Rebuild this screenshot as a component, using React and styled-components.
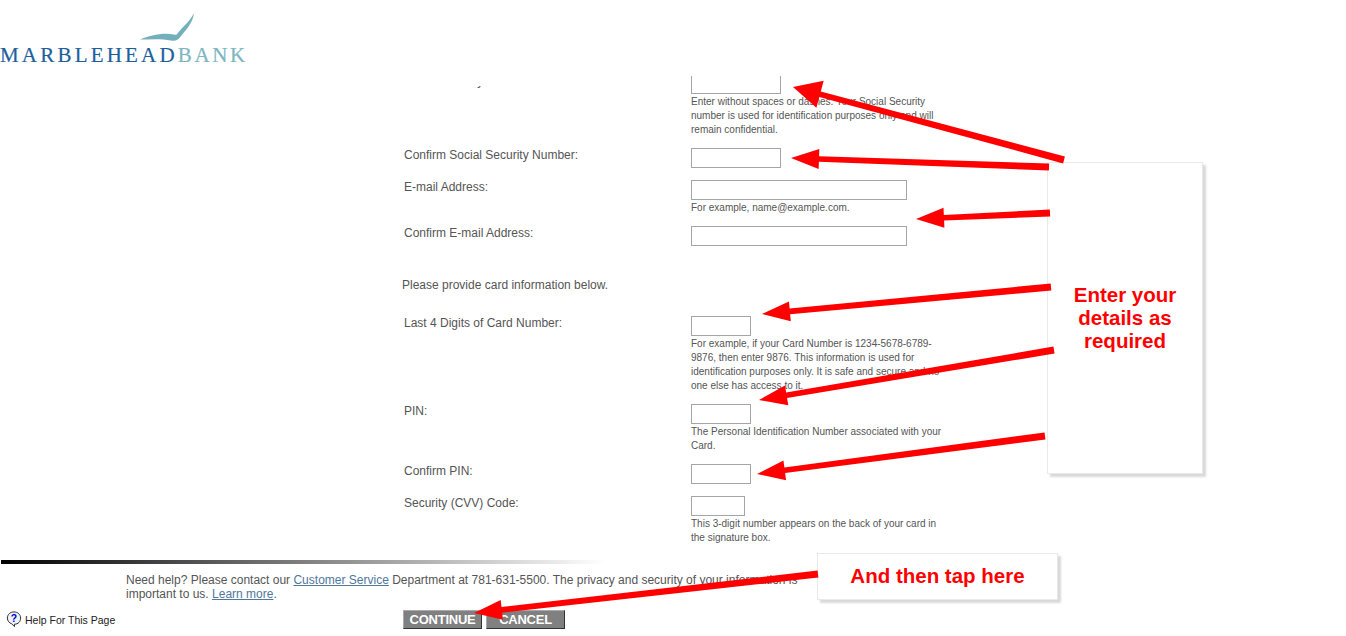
import styled, { createGlobalStyle } from 'styled-components';

const GlobalStyle = createGlobalStyle`
    html, body {
        margin: 0;
        padding: 0;
        background: #fff;
    }
    body {
        font-family: "Liberation Sans", Arial, sans-serif;
    }
`;

const Page = styled.div`
    position: relative;
    width: 1346px;
    height: 636px;
    display: flex;
    flex-direction: column;
    overflow: hidden;
    background: #fff;
`;

const Header = styled.header`
    position: relative;
    height: 76px;
    flex: none;
`;
const Bird = styled.svg`
    position: absolute;
    left: 0;
    top: 0;
`;
const Wordmark = styled.div`
    padding-top: 43px;
    font-family: "Liberation Serif", "Times New Roman", serif;
    font-size: 21px;
    line-height: 24px;
    letter-spacing: 3.2px;
    white-space: nowrap;
    color: #1c5f9c;
    -webkit-text-stroke: 0.2px currentColor;
`;
const WordmarkLight = styled.span`
    color: #7db6c2;
    letter-spacing: 2.6px;
`;

const FormArea = styled.main`
    height: 484px;
    flex: none;
    overflow: hidden;
    padding-left: 404px;
`;
const FormGroup = styled.div`
    display: flex;
    flex-direction: column;
    gap: 12px;
    margin-top: ${(p) => p.$offset || 0}px;
`;
const Row = styled.div`
    display: grid;
    grid-template-columns: 287px 255px;
`;
const Label = styled.label`
    font-size: 12px;
    line-height: 14px;
    color: #555;
`;
// the page is scrolled: only the tail under the baseline still shows
const ScrolledLabel = styled(Label)`
    clip-path: inset(12px 0 0 0);
`;
const Field = styled.div`
    display: flex;
    flex-direction: column;
    align-items: flex-start;
`;
const TextBox = styled.input`
    box-sizing: border-box;
    width: ${(p) => p.$width}px;
    height: 20px;
    margin: 0;
    padding: 0;
    border: 1px solid #a5a5a5;
    background: #fff;
`;
const Hint = styled.p`
    margin: 1px 0 -1px;
    font-size: 10px;
    line-height: 14px;
    color: #555;
`;
const SectionNote = styled.p`
    margin: 31px 0 23px -2px;
    font-size: 12px;
    line-height: 16px;
    color: #555;
`;

const Footer = styled.footer`
    flex: 1;
`;
const Rule = styled.div`
    width: 604px;
    height: 4px;
    margin-left: 1px;
    background: linear-gradient(to right, #000, #fff);
`;
const HelpText = styled.p`
    width: 680px;
    margin: 9px 0 0 126px;
    font-size: 12px;
    line-height: 14px;
    color: #555;
`;
const TextLink = styled.a`
    color: #50779c;
    text-decoration: underline;
`;
const BottomRow = styled.div`
    display: grid;
    grid-template-columns: 403px auto;
    align-items: start;
    margin-top: 9px;
`;
const PageHelp = styled.div`
    display: flex;
    align-items: center;
    gap: 3px;
    padding: 1px 0 0 6px;
    font-size: 10.5px;
    line-height: 16px;
    color: #222;
`;
const Buttons = styled.div`
    display: flex;
    gap: 4px;
`;
const ActionButton = styled.button`
    box-sizing: border-box;
    width: 79px;
    height: 19px;
    padding: 0;
    border: 1px solid;
    border-color: #aaa #333 #333 #aaa;
    background: #808080;
    color: #fff;
    font-family: "Liberation Sans", Arial, sans-serif;
    font-size: 13px;
    font-weight: bold;
    letter-spacing: -0.25px;
    line-height: 16px;
`;

const Callout = styled.aside`
    position: absolute;
    left: ${(p) => p.$left}px;
    top: ${(p) => p.$top}px;
    width: ${(p) => p.$width}px;
    height: ${(p) => p.$height}px;
    box-sizing: border-box;
    display: flex;
    align-items: center;
    justify-content: center;
    padding: 0 10px 2px;
    border: 1px solid #e9e9e9;
    box-shadow: 3px 3px 2px #d9d9d9;
    background: #fff;
    text-align: center;
    color: #f00;
    font-size: 20.5px;
    font-weight: bold;
    line-height: 23px;
`;
const ArrowLayer = styled.svg`
    position: absolute;
    left: 0;
    top: 0;
    pointer-events: none;
`;

// tail x/y, tip x/y, half width of the head
const arrows = [
    [1064, 160, 793, 87, 14],
    [1049, 167, 791, 158, 10],
    [1050, 213, 916, 219, 10],
    [1051, 287, 762, 314, 10],
    [1054, 350, 759, 400, 10],
    [1045, 436, 757, 474, 10],
    [818, 574, 474, 613, 10],
];

// shaft + head as a single polygon
const arrowPoints = ([x1, y1, x2, y2, head]) => {
    const len = Math.hypot(x2 - x1, y2 - y1);
    const ux = (x2 - x1) / len;
    const uy = (y2 - y1) / len;
    const nx = -uy;
    const ny = ux;
    const bx = x2 - ux * 28;
    const by = y2 - uy * 28;
    const p = (x, y, off) => `${x + nx * off},${y + ny * off}`;
    return [
        p(x1, y1, 3.5),
        p(bx, by, 2.8),
        p(bx, by, head),
        `${x2},${y2}`,
        p(bx, by, -head),
        p(bx, by, -2.8),
        p(x1, y1, -3.5),
    ].join(' ');
};

const App = () => {
    return (
        <Page>
            <GlobalStyle />
            <Header>
                <Bird width="260" height="76" viewBox="0 0 260 76">
                    <path
                        d="M140 39.500C150 35.500 162 32.500 174 34.500C176 34.800 176.500 35 177.500 33.500C182 27 189 23 194 13C193 22 187 29 181 36C178.500 39.500 176 41.500 171 40.500C161 38.500 150 39.500 140 39.500Z"
                        fill="#74b0bc"
                    />
                </Bird>
                <Wordmark>
                    MARBLEHEAD<WordmarkLight>BANK</WordmarkLight>
                </Wordmark>
            </Header>
            <FormArea>
                <FormGroup $offset={-2}>
                    <Row>
                        <ScrolledLabel>Social Security Number:</ScrolledLabel>
                        <Field>
                            <TextBox $width={90} />
                            <Hint>
                                Enter without spaces or dashes. Your Social Security number is used for
                                identification purposes only and will remain confidential.
                            </Hint>
                        </Field>
                    </Row>
                    <Row>
                        <Label>Confirm Social Security Number:</Label>
                        <Field>
                            <TextBox $width={90} />
                        </Field>
                    </Row>
                    <Row>
                        <Label>E-mail Address:</Label>
                        <Field>
                            <TextBox $width={216} />
                            <Hint>For example, name@example.com.</Hint>
                        </Field>
                    </Row>
                    <Row>
                        <Label>Confirm E-mail Address:</Label>
                        <Field>
                            <TextBox $width={216} />
                        </Field>
                    </Row>
                </FormGroup>
                <SectionNote>Please provide card information below.</SectionNote>
                <FormGroup>
                    <Row>
                        <Label>Last 4 Digits of Card Number:</Label>
                        <Field>
                            <TextBox $width={60} />
                            <Hint>
                                For example, if your Card Number is 1234-5678-6789-9876, then enter 9876. This
                                information is used for identification purposes only. It is safe and secure and
                                no one else has access to it.
                            </Hint>
                        </Field>
                    </Row>
                    <Row>
                        <Label>PIN:</Label>
                        <Field>
                            <TextBox $width={60} />
                            <Hint>The Personal Identification Number associated with your Card.</Hint>
                        </Field>
                    </Row>
                    <Row>
                        <Label>Confirm PIN:</Label>
                        <Field>
                            <TextBox $width={60} />
                        </Field>
                    </Row>
                    <Row>
                        <Label>Security (CVV) Code:</Label>
                        <Field>
                            <TextBox $width={54} />
                            <Hint>This 3-digit number appears on the back of your card in the signature box.</Hint>
                        </Field>
                    </Row>
                </FormGroup>
            </FormArea>
            <Footer>
                <Rule />
                <HelpText>
                    Need help? Please contact our <TextLink>Customer Service</TextLink> Department at
                    781-631-5500. The privacy and security of your information is important to us.{' '}
                    <TextLink>Learn more</TextLink>.
                </HelpText>
                <BottomRow>
                    <PageHelp>
                        <svg width="16" height="17" viewBox="0 0 16 18">
                            <path
                                d="M8 1C4 1 1 3.600 1 7.500C1 10.500 3 12.800 5.500 13.500L8.500 16.500L8.500 14C12.500 14 15 11.200 15 7.500C15 3.600 12 1 8 1Z"
                                fill="#eef3fb"
                                stroke="#222"
                            />
                            <text x="8" y="11.500" textAnchor="middle" fontSize="11" fontWeight="bold" fill="#00c">?</text>
                        </svg>
                        Help For This Page
                    </PageHelp>
                    <Buttons>
                        <ActionButton type="button">CONTINUE</ActionButton>
                        <ActionButton type="button">CANCEL</ActionButton>
                    </Buttons>
                </BottomRow>
            </Footer>
            <Callout $left={1047} $top={162} $width={156} $height={312}>
                Enter your details as required
            </Callout>
            <Callout $left={817} $top={553} $width={241} $height={47}>
                And then tap here
            </Callout>
            <ArrowLayer width="1346" height="636" viewBox="0 0 1346 636">
                {arrows.map((a) => (
                    <polygon key={a.join()} points={arrowPoints(a)} fill="#f00" />
                ))}
            </ArrowLayer>
        </Page>
    );
};

export default App;
